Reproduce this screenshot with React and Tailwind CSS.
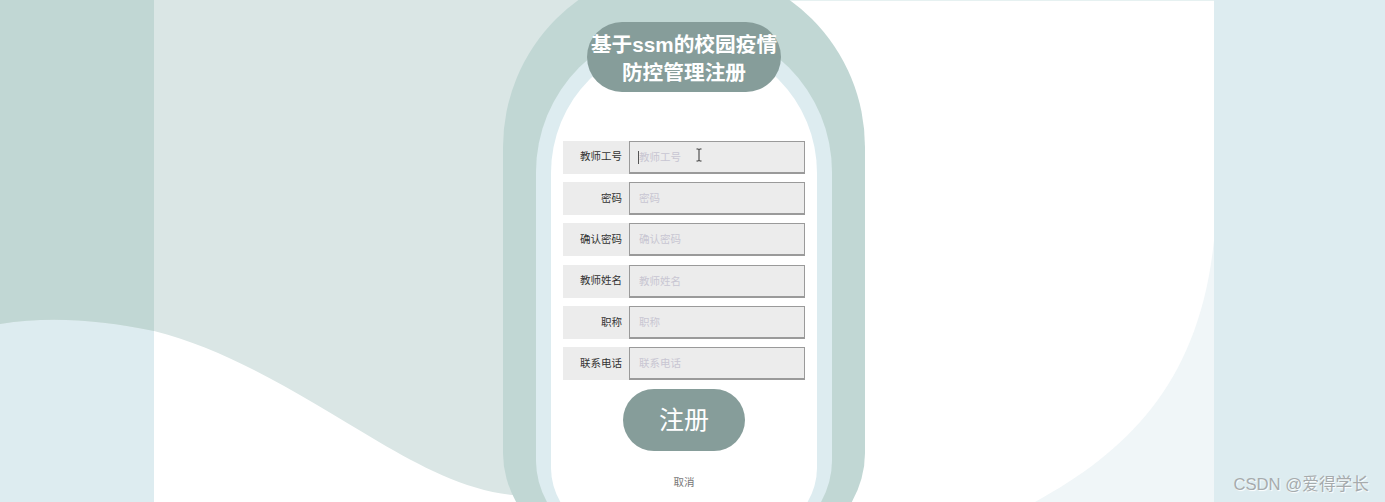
import React from "react";

const fields = ["教师工号", "密码", "确认密码", "教师姓名", "职称", "联系电话"];
const wave =
  "M0 324 C 50 316, 100 320, 154 331 C 230 350, 300 395, 379 442 C 420 466, 465 490, 512 495 L 684 495 L 684 0 L 0 0 Z";
const font = "font-['Liberation_Sans','Noto_Sans_CJK_SC',sans-serif]";

function Field({ label, index }) {
  return (
    <div className="flex h-[33px]">
      <label className="flex w-[66px] items-center justify-end bg-[#ececec] pr-[7px] text-[10.5px] text-[#333]">
        {label}
      </label>
      <div className="relative flex-1">
        <input
          placeholder={label}
          className="h-full w-full border border-b-2 border-[#9a9a9a] bg-[#ececec] pl-[9px] text-[10.5px] outline-none placeholder:text-[#c8c6d2]"
        />
        {index === 0 && (
          <>
            <span className="absolute left-[9px] top-[10px] h-[13px] w-px bg-[#555]" />
            <svg className="absolute left-[67px] top-[7px]" width="6" height="14" viewBox="0 0 6 14" fill="none" stroke="#333" strokeWidth="1">
              <path d="M0.5 1H2.5L3 1.8L3.5 1H5.5M3 1.8V12.2M0.5 13H2.5L3 12.2L3.5 13H5.5" />
            </svg>
          </>
        )}
      </div>
    </div>
  );
}

export default function App() {
  return (
    <div className={`relative flex h-[502px] w-full overflow-hidden bg-[#ddecf0] ${font}`}>
      <svg className="absolute inset-0" width="1385" height="502" viewBox="0 0 1385 502">
        <rect x="154" y="0" width="1060" height="502" fill="#ffffff" />
        <rect x="154" y="0" width="1060" height="1" fill="#e6f1f1" />
        <path d={wave} fill="#dae6e5" />
        <svg x="0" y="0" width="154" height="502">
          <path d={wave} fill="#c1d7d4" />
        </svg>
        <path d="M1214 240 C 1200 380, 1130 450, 1035 502 L 1214 502 Z" fill="#f0f6f8" />
      </svg>

      <div className="relative ml-[154px] flex w-[1060px] justify-center">
        <form className="relative -mt-[34px] h-[618px] w-[362px] shrink-0 rounded-t-[181px] rounded-b-[181px_131px] bg-[#c1d7d4] px-[33px] pt-[58px]">
          <h1 className="absolute left-1/2 top-[56px] flex h-[70px] w-[194px] -translate-x-1/2 items-center justify-center whitespace-nowrap rounded-[35px] bg-[#869d9a] pt-1 text-center text-[20.7px] font-bold leading-[28px] text-white">
            <span>
              基于ssm的校园疫情
              <br />
              防控管理注册
            </span>
          </h1>
          <div className="h-[546px] rounded-t-[149px] rounded-b-[149px_110px] bg-[#ddecf0] px-[15px] pt-[16px]">
            <div className="flex h-[520px] flex-col rounded-t-[133px] rounded-b-[133px_92px] bg-white px-3 pt-[100.5px]">
              <div className="flex flex-col gap-[8.4px]">
                {fields.map((f, i) => (
                  <Field key={f} label={f} index={i} />
                ))}
              </div>
              <button type="button" className="mx-auto mt-[9px] h-[62px] w-[122px] rounded-[31px] bg-[#869d9a] text-[25px] text-white">
                注册
              </button>
              <a className="mt-6 text-center text-[10.5px] text-[#777]">取消</a>
            </div>
          </div>
        </form>
      </div>

      <span className="absolute bottom-[7px] right-[16px] text-[16.7px] leading-[20px] text-[#a6abad] [text-shadow:1px_1px_1px_#fff]">
        CSDN @爱得学长
      </span>
    </div>
  );
}
